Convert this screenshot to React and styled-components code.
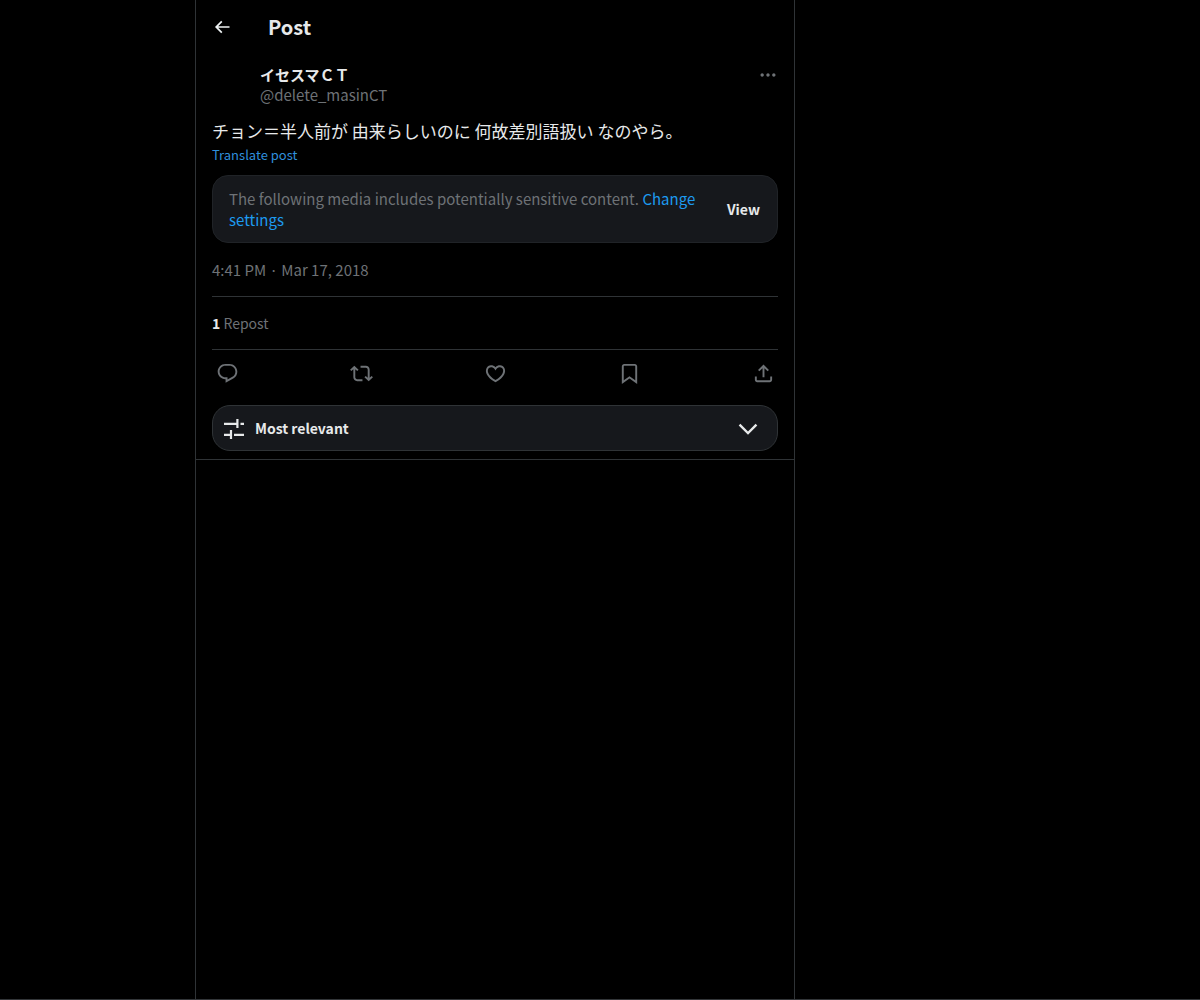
import React from "react";
import styled, { createGlobalStyle } from "styled-components";

const GlobalStyle = createGlobalStyle`
  * { box-sizing: border-box; }
  body {
    margin: 0;
    background: #000;
    color: #e7e9ea;
    font-family: "Noto Sans CJK JP", sans-serif;
    font-size: 15px;
    line-height: 21px;
  }
  button {
    border: 0;
    padding: 0;
    background: none;
    color: inherit;
    font: inherit;
    cursor: pointer;
  }
  h1, h2, p { margin: 0; }
`;

const Page = styled.div`
  display: grid;
  grid-template-columns: 195px minmax(0, 600px) 1fr;
  min-height: 100vh;
  border-bottom: 1px solid #333639;
`;

const Column = styled.main`
  grid-column: 2;
  border: solid #2f3336;
  border-width: 0 1px;
`;

const Header = styled.header`
  display: flex;
  align-items: center;
  gap: 36px;
  height: 54px;
  padding: 0 16px;
`;

const Title = styled.h1`
  font-size: 20px;
  line-height: 24px;
  font-weight: 700;
`;

const IconButton = styled.button`
  display: flex;
  color: ${(p) => p.$color || "#6e7276"};
`;

const Svg = styled.svg`
  display: block;
  width: ${(p) => p.$size}px;
  height: ${(p) => p.$size}px;
  fill: currentColor;
`;

const Post = styled.article`
  padding: 11px 16px 8px;
  border-bottom: 1px solid #2f3336;
`;

const Author = styled.div`
  display: flex;
  align-items: flex-start;
  gap: 8px;
`;

const Avatar = styled.div`
  width: 40px;
  height: 40px;
  border-radius: 50%;
`;

const Names = styled.div`
  flex: 1;
  line-height: 20px;
`;

const Name = styled.h2`
  font-size: 15px;
  font-weight: 700;
`;

const Muted = styled.p`
  color: #6e7276;
`;

const Body = styled.p`
  margin-top: 14px;
  font-size: 17px;
  line-height: 24px;
`;

const Translate = styled.button`
  display: block;
  margin-top: 4px;
  color: #2f8fdc;
  font-size: 13px;
  line-height: 16px;
`;

const Notice = styled.section`
  display: flex;
  align-items: center;
  gap: 24px;
  margin-top: 12px;
  padding: 12px 16px;
  border: 1px solid #202327;
  border-radius: 16px;
  background: #16181c;
`;

const NoticeText = styled(Muted)`
  flex: 1;
`;

const Link = styled.a`
  color: #1d9bf0;
  text-decoration: none;
`;

const ViewButton = styled.button`
  font-size: 14px;
  font-weight: 700;
  padding-right: 1px;
`;

const Stamp = styled(Muted)`
  padding: 16px 0;
`;

const Stats = styled(Muted)`
  padding: 16px 0 15px;
  border: solid #2f3336;
  border-width: 1px 0;
  font-size: 14px;
`;

const Count = styled.strong`
  color: #e7e9ea;
  font-weight: 700;
`;

const Actions = styled.div`
  display: flex;
  align-items: center;
  justify-content: space-between;
  height: 47px;
  padding: 0 3px 0 4px;
`;

const SortButton = styled.button`
  display: flex;
  align-items: center;
  gap: 9px;
  width: 100%;
  height: 46px;
  margin-top: 8px;
  padding: 0 17px 0 9px;
  border: 1px solid #2f3336;
  border-radius: 18px;
  background: #16181c;
  font-size: 14px;
  font-weight: 700;
  text-align: left;
`;

const SortLabel = styled.span`
  flex: 1;
`;

const paths = {
  back: "M7.414 13l5.043 5.04-1.414 1.42L3.586 12l7.457-7.46 1.414 1.42L7.414 11H21v2H7.414z",
  more: "M3 12c0-1.1.9-2 2-2s2 .9 2 2-.9 2-2 2-2-.9-2-2zm9 2c1.1 0 2-.9 2-2s-.9-2-2-2-2 .9-2 2 .9 2 2 2zm7 0c1.1 0 2-.9 2-2s-.9-2-2-2-2 .9-2 2 .9 2 2 2z",
  reply: "M1.751 10c0-4.42 3.584-8 8.005-8h4.366c4.49 0 8.129 3.64 8.129 8.13 0 2.96-1.607 5.68-4.196 7.11l-8.054 4.46v-3.69h-.067c-4.49.1-8.183-3.51-8.183-8.01zm8.005-6c-3.317 0-6.005 2.69-6.005 6 0 3.37 2.77 6.08 6.138 6.01l.351-.01h1.761v2.3l5.087-2.81c1.951-1.08 3.163-3.13 3.163-5.36 0-3.39-2.744-6.13-6.129-6.13H9.756z",
  repost: "M4.5 3.88l4.432 4.14-1.364 1.46L5.5 7.55V16c0 1.1.896 2 2 2H13v2H7.5c-2.209 0-4-1.79-4-4V7.55L1.432 9.48.068 8.02 4.5 3.88zM16.5 6H11V4h5.5c2.209 0 4 1.79 4 4v8.45l2.068-1.93 1.364 1.46-4.432 4.14-4.432-4.14 1.364-1.46 2.068 1.93V8c0-1.1-.896-2-2-2z",
  like: "M16.697 5.5c-1.222-.06-2.679.51-3.89 2.16l-.805 1.09-.806-1.09C9.984 6.01 8.526 5.44 7.304 5.5c-1.243.07-2.349.78-2.91 1.91-.552 1.12-.633 2.78.479 4.82 1.074 1.97 3.257 4.27 7.129 6.61 3.87-2.34 6.052-4.64 7.126-6.61 1.111-2.04 1.03-3.7.477-4.82-.561-1.13-1.666-1.84-2.908-1.91zm4.187 7.69c-1.351 2.48-4.001 5.12-8.379 7.67l-.503.3-.504-.3c-4.379-2.55-7.029-5.19-8.382-7.67-1.36-2.5-1.41-4.86-.514-6.67.887-1.79 2.647-2.91 4.601-3.01 1.651-.09 3.368.56 4.798 2.01 1.429-1.45 3.146-2.1 4.796-2.01 1.954.1 3.714 1.22 4.601 3.01.896 1.81.846 4.17-.514 6.67z",
  bookmark: "M4 4.5C4 3.12 5.119 2 6.5 2h11C18.881 2 20 3.12 20 4.5v18.44l-8-5.71-8 5.71V4.5zM6.5 4c-.276 0-.5.22-.5.5v14.56l6-4.29 6 4.29V4.5c0-.28-.224-.5-.5-.5h-11z",
  share: "M12 2.59l5.7 5.7-1.41 1.42L13 6.41V16h-2V6.41l-3.3 3.3-1.41-1.42L12 2.59zM21 15l-.02 3.51c0 1.38-1.12 2.49-2.5 2.49H5.5C4.11 21 3 19.88 3 18.5V15h2v3.5c0 .28.22.5.5.5h12.98c.28 0 .5-.22.5-.5L19 15h2z",
  chevron: "M2.7 9.4l1.7-1.7 7.6 7.7 7.6-7.7 1.7 1.7L12 18.8z",
  sliders: "M2 6.8h12.3V3h2.2v9h-2.2V9H2V6.8zM18.5 6.8H22V9h-3.5V6.8zM2 17.8h5.9V14h2.2v9H7.9v-3H2v-2.2zM12 17.8h10V20H12v-2.2z",
};

const Icon = ({ name, size }) => (
  <Svg $size={size} viewBox="0 0 24 24" aria-hidden="true">
    <path d={paths[name]} />
  </Svg>
);

const actions = [
  ["reply", "Reply"],
  ["repost", "Repost"],
  ["like", "Like"],
  ["bookmark", "Bookmark"],
  ["share", "Share"],
];

export default function App() {
  return (
    <>
      <GlobalStyle />
      <Page>
        <Column>
          <Header>
            <IconButton $color="#eff3f4" aria-label="Back">
              <Icon name="back" size={20} />
            </IconButton>
            <Title>Post</Title>
          </Header>
          <Post>
            <Author>
              <Avatar />
              <Names>
                <Name lang="ja">イセスマＣＴ</Name>
                <Muted>@delete_masinCT</Muted>
              </Names>
              <IconButton aria-label="More">
                <Icon name="more" size={20} />
              </IconButton>
            </Author>
            <Body lang="ja">チョン＝半人前が 由来らしいのに 何故差別語扱い なのやら。</Body>
            <Translate>Translate post</Translate>
            <Notice>
              <NoticeText>
                The following media includes potentially sensitive content.{" "}
                <Link href="#settings">Change settings</Link>
              </NoticeText>
              <ViewButton>View</ViewButton>
            </Notice>
            <Stamp>4:41 PM · Mar 17, 2018</Stamp>
            <Stats>
              <Count>1</Count> Repost
            </Stats>
            <Actions>
              {actions.map(([name, label]) => (
                <IconButton key={name} aria-label={label}>
                  <Icon name={name} size={23} />
                </IconButton>
              ))}
            </Actions>
            <SortButton>
              <Icon name="sliders" size={24} />
              <SortLabel>Most relevant</SortLabel>
              <Icon name="chevron" size={24} />
            </SortButton>
          </Post>
        </Column>
      </Page>
    </>
  );
}
